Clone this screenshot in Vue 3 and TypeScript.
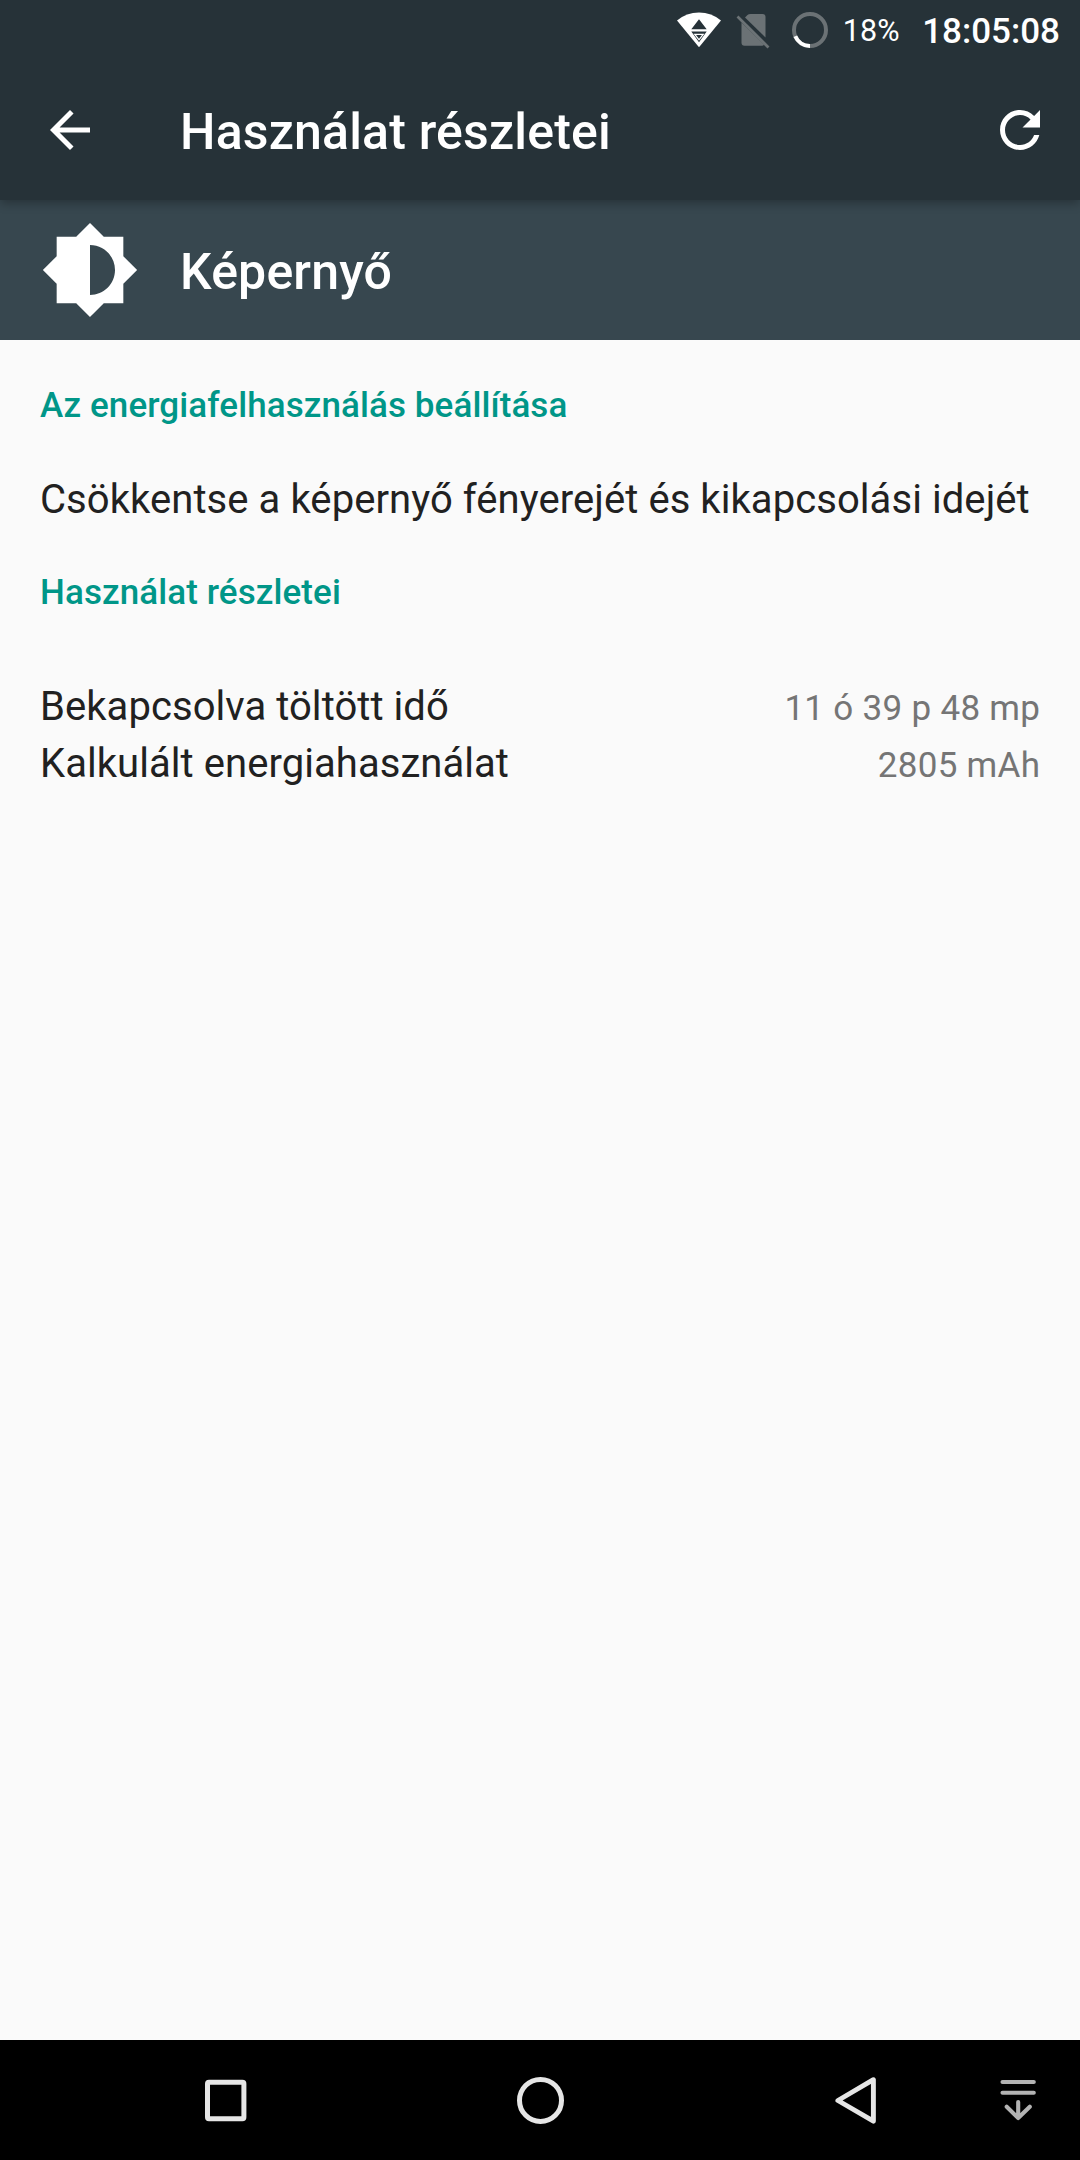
<script setup lang="ts">
interface UsageRow {
  label: string
  value: string
}

const rows: UsageRow[] = [
  { label: 'Bekapcsolva töltött idő', value: '11 ó 39 p 48 mp' },
  { label: 'Kalkulált energiahasználat', value: '2805 mAh' },
]
</script>

<template>
  <div class="screen">
    <header class="top">
      <div class="status">
        <svg class="wifi" width="46" height="36" viewBox="0 0 46 36">
          <path fill="#fff" d="M1 8.4Q10.500 .4 23 .4T45 8.400L23 35.200Z" />
          <path fill="#263238" d="M23 7.300L30.700 17.300H15.300ZM15.300 19.500H30.700L23 30.300Z" />
          <path fill="none" stroke="#fff" stroke-width="1.300" d="M18.800 22.300H27.200L23 27.800Z" />
        </svg>
        <svg class="sim" width="34" height="38" viewBox="0 0 34 38">
          <path fill="#6b7275" d="M14.500 2H26.500Q29.500 2 29.500 5V25.500L9 5.500L11.500 3Q12.500 2 14.500 2Z" />
          <path fill="#6b7275" d="M5.500 10.500L28 32.500Q27.500 33.800 26 33.800H8.500Q5.500 33.800 5.500 30.800Z" />
          <path stroke="#6b7275" stroke-width="2.700" d="M1.500 4.500L32.500 35.500" />
        </svg>
        <svg class="battery" width="38" height="38" viewBox="0 0 38 38">
          <circle cx="19" cy="19" r="16" fill="none" stroke="#6b7275" stroke-width="4" />
          <path fill="none" stroke="#fff" stroke-width="4" d="M19 35A16 16 0 0 1 4.300 25.300" />
        </svg>
        <span class="percent">18%</span>
        <span class="clock">18:05:08</span>
      </div>
      <div class="toolbar">
        <svg class="back" width="60" height="60" viewBox="0 0 24 24" fill="#fff">
          <path d="M20 11H7.830l5.590-5.590L12 4l-8 8 8 8 1.410-1.410L7.830 13H20v-2z" />
        </svg>
        <h1 class="title">Használat részletei</h1>
        <svg class="refresh" width="60" height="60" viewBox="0 0 24 24" fill="#fff">
          <path d="M17.650 6.350C16.200 4.900 14.210 4 12 4c-4.420 0-7.990 3.580-7.990 8s3.570 8 7.990 8c3.730 0 6.840-2.550 7.730-6h-2.080c-.82 2.330-3.040 4-5.650 4-3.310 0-6-2.690-6-6s2.690-6 6-6c1.660 0 3.140.69 4.220 1.780L13 11h7V4l-2.350 2.350z" />
        </svg>
      </div>
    </header>

    <section class="entity">
      <svg width="100" height="100" viewBox="0 0 24 24" fill="#fff">
        <path d="M20 15.310L23.310 12 20 8.690V4h-4.690L12 .69 8.690 4H4v4.690L.69 12 4 15.310V20h4.690L12 23.310 15.310 20H20v-4.690zM12 18V6c3.310 0 6 2.690 6 6s-2.690 6-6 6z" />
      </svg>
      <h2 class="title">Képernyő</h2>
    </section>

    <main class="content">
      <h3 class="category">Az energiafelhasználás beállítása</h3>
      <p class="advice">Csökkentse a képernyő fényerejét és kikapcsolási idejét</p>
      <h3 class="category">Használat részletei</h3>
      <div class="rows">
        <div v-for="row in rows" :key="row.label" class="row">
          <span class="label">{{ row.label }}</span>
          <span class="value">{{ row.value }}</span>
        </div>
      </div>
    </main>

    <nav class="nav">
      <svg class="recent" width="50" height="50" viewBox="0 0 50 50">
        <rect x="7.500" y="7.200" width="36.400" height="36.600" rx="1.500" fill="none" stroke="#e6e6e6" stroke-width="5" />
      </svg>
      <svg class="home" width="50" height="50" viewBox="0 0 50 50">
        <circle cx="25.500" cy="25.400" r="21" fill="none" stroke="#e6e6e6" stroke-width="5" />
      </svg>
      <svg class="prev" width="50" height="50" viewBox="0 0 50 50">
        <path d="M45.400 4.700V46.200L9.900 25.500Z" fill="none" stroke="#e6e6e6" stroke-width="4.900" stroke-linejoin="round" />
      </svg>
      <svg class="hide" width="50" height="50" viewBox="0 0 50 50">
        <path d="M9.500 7H40.800M9.500 17.800H40.800M25.200 27V43M13.700 31.700L25.200 43L36.800 31.700" fill="none" stroke="#b3b3b3" stroke-width="4.100" stroke-linecap="round" stroke-linejoin="round" />
      </svg>
    </nav>
  </div>
</template>

<style>
body {
  margin: 0;
}
</style>

<style scoped>
.screen {
  display: flex;
  flex-direction: column;
  width: 1080px;
  height: 2160px;
  overflow: hidden;
  background: #fafafa;
  color: #212121;
  font-family: Roboto, sans-serif;
}
svg {
  display: block;
  flex: none;
}
h1,
h2,
h3,
p {
  margin: 0;
  white-space: nowrap;
}
.top {
  position: relative;
  z-index: 1;
  height: 200px;
  background: #263238;
  color: #fff;
  box-shadow: 0 3px 10px rgba(0, 0, 0, 0.3);
}
.status {
  display: flex;
  justify-content: flex-end;
  height: 60px;
  padding-right: 20px;
}
.wifi {
  margin: 12px 14px 0 0;
}
.sim {
  margin: 12px 21px 0 0;
}
.battery {
  margin: 11px 14px 0 0;
}
.percent {
  margin-right: 22.5px;
  font-size: 30.5px;
  line-height: 62px;
  letter-spacing: 0.1px;
}
.clock {
  font-size: 35px;
  font-weight: 500;
  line-height: 63px;
}
.toolbar {
  display: flex;
  align-items: center;
  height: 140px;
  padding: 0 30px 0 40px;
}
.title {
  font-size: 50px;
  font-weight: 500;
  line-height: 60px;
  letter-spacing: 0.18px;
  padding-top: 4px;
}
.toolbar .title {
  margin-left: 80px;
}
.refresh {
  margin-left: auto;
}
.entity {
  display: flex;
  align-items: center;
  gap: 40px;
  height: 140px;
  padding: 0 40px;
  background: #37474f;
  color: #fff;
}
.content {
  flex: 1;
  padding: 45px 40px 0;
}
.category {
  font-size: 35px;
  font-weight: 500;
  line-height: 41px;
  letter-spacing: 0.09px;
  color: #009688;
}
.advice {
  margin: 50px 0 49px;
  font-size: 40px;
  line-height: 47px;
  letter-spacing: 0.07px;
}
.rows {
  margin-top: 65px;
}
.row {
  display: flex;
  justify-content: space-between;
  align-items: baseline;
  height: 57px;
}
.label {
  font-size: 40px;
  line-height: 57px;
  letter-spacing: 0.06px;
}
.value {
  margin-right: -0.3px;
  font-size: 35px;
  line-height: 57px;
  letter-spacing: 0.3px;
  color: #757575;
}
.nav {
  display: flex;
  align-items: center;
  height: 120px;
  padding-left: 200px;
  background: #000;
}
.home {
  margin-left: 265px;
}
.prev {
  margin-left: 263px;
}
.hide {
  margin-left: 115px;
}
</style>
